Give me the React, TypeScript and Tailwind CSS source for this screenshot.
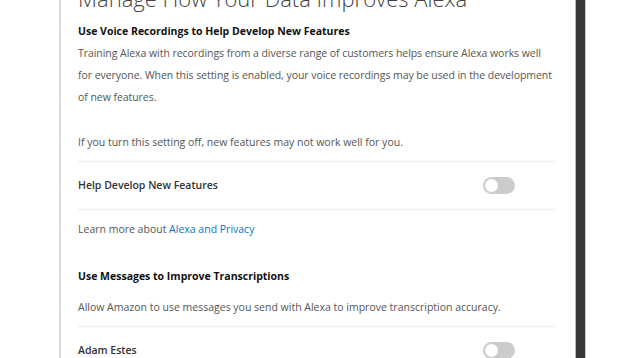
export default function App() {
  return (
    <div className="w-[636px] h-[358px] overflow-hidden bg-white flex items-start font-['Open_Sans',sans-serif]">
      <div className="w-[59px] shrink-0" />
      <div className="w-[2px] h-[358px] shrink-0 bg-[#dddddd]" />
      <div className="w-[514px] shrink-0 flex flex-col pl-[17px] pr-[19px] -mt-[16px]">
        <h1 className="shrink-0 text-[22px] leading-[28px] font-light text-[#444] whitespace-nowrap">
          Manage How Your Data Improves Alexa
        </h1>

        <h2 className="shrink-0 mt-[10px] text-[10.5px] leading-[18px] font-bold text-[#111]">
          Use Voice Recordings to Help Develop New Features
        </h2>
        <p className="shrink-0 mt-[2px] text-[10.5px] leading-[22px] text-[#555] whitespace-nowrap tracking-[-0.05px]">
          Training Alexa with recordings from a diverse range of customers helps ensure Alexa works well
          <br />
          for everyone. When this setting is enabled, your voice recordings may be used in the development
          <br />
          of new features.
        </p>
        <p className="shrink-0 mt-[23px] text-[10.5px] leading-[22px] text-[#555]">
          If you turn this setting off, new features may not work well for you.
        </p>

        <div className="shrink-0 mt-[8px] border-t border-[#eeeeee] h-[48px] flex items-center justify-between">
          <span className="text-[10.5px] font-semibold text-[#333]">Help Develop New Features</span>
          <Toggle />
        </div>
        <div className="shrink-0 border-t border-[#eeeeee] pt-[10px] text-[10.5px] leading-[18px] text-[#555]">
          Learn more about <span className="text-[#0a74d0]">Alexa and Privacy</span>
        </div>

        <h2 className="shrink-0 mt-[29px] text-[10.5px] leading-[18px] font-bold text-[#111]">
          Use Messages to Improve Transcriptions
        </h2>
        <p className="shrink-0 mt-[13px] text-[10.5px] leading-[18px] text-[#555]">
          Allow Amazon to use messages you send with Alexa to improve transcription accuracy.
        </p>
        <div className="shrink-0 mt-[10px] border-t border-[#eeeeee] h-[48px] flex items-center justify-between">
          <span className="text-[10.5px] font-semibold text-[#333]">Adam Estes</span>
          <Toggle />
        </div>
      </div>
      <div className="w-[1px] h-[358px] shrink-0 bg-[#bbbbbb]" />
      <div className="w-[9px] h-[358px] shrink-0 bg-[#383838]" />
      <div className="w-[1px] h-[358px] shrink-0 bg-[#cccccc]" />
    </div>
  );
}

function Toggle() {
  return (
    <div className="mr-[41px] w-[32px] h-[17px] rounded-full bg-[#cccccc] flex items-center px-[2px]">
      <div className="w-[13px] h-[13px] rounded-full bg-white" />
    </div>
  );
}
